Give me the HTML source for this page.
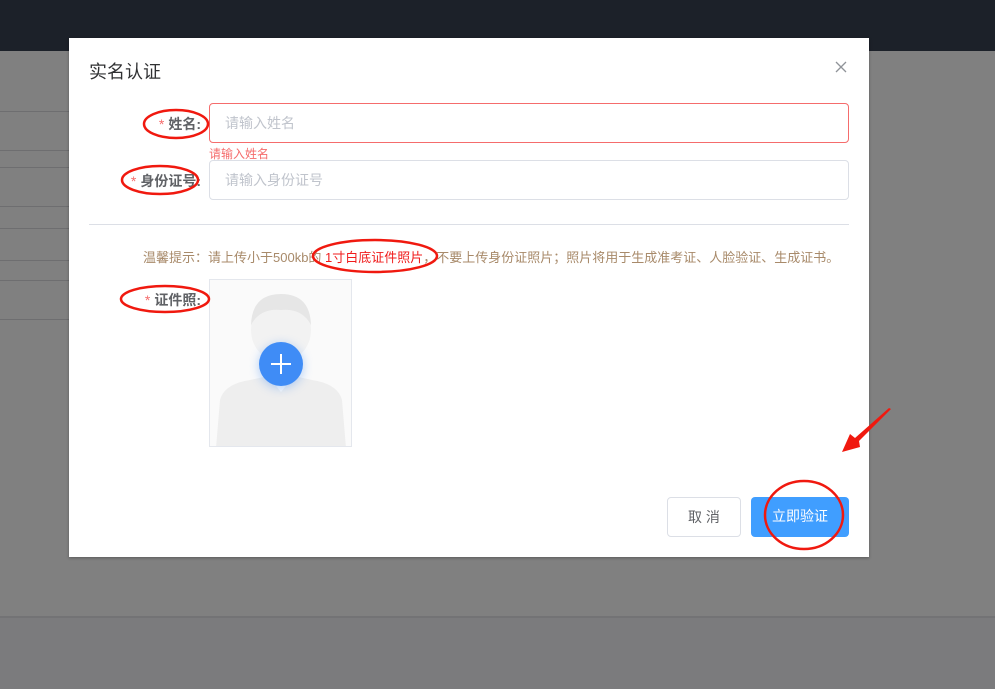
<!DOCTYPE html>
<html><head><meta charset="utf-8"><style>
*{margin:0;padding:0;box-sizing:border-box}
body{width:995px;height:689px;position:relative;overflow:hidden;background:#808080;font-family:"Liberation Sans","Noto Sans CJK SC",sans-serif}
.top{position:absolute;left:0;top:0;width:995px;height:51px;background:#1c2129}
.ln{position:absolute;left:0;width:69px;height:1px;background:#6e6e70}
.bot{position:absolute;left:0;top:616px;width:995px;height:73px;background:#7b7b7d;border-top:2px solid #737375}
.dlg{position:absolute;left:69px;top:38px;width:800px;height:519px;background:#fff;box-shadow:0 1px 3px rgba(0,0,0,.3)}
.abs{position:absolute}
.lbl{position:absolute;font-size:14px;font-weight:bold;color:#606266;text-align:right;width:112px;white-space:nowrap}
.lbl b{color:#f56c6c;font-weight:normal;margin-right:4px}
.inp{position:absolute;left:140px;width:640px;height:40px;border:1px solid #dcdfe6;border-radius:4px;padding-left:15px;line-height:38px;font-size:14px;color:#c0c4cc}
.btn{position:absolute;height:40px;border-radius:4px;font-size:14px;text-align:center;line-height:38px}
</style></head><body>
<div class="top"></div>
<div class="ln" style="top:111px"></div><div class="ln" style="top:150px"></div><div class="ln" style="top:167px"></div><div class="ln" style="top:206px"></div><div class="ln" style="top:228px"></div><div class="ln" style="top:260px"></div><div class="ln" style="top:280px"></div><div class="ln" style="top:319px"></div>
<div class="bot"></div>
<div class="dlg">
<div class="abs" style="left:20px;top:20px;font-size:18px;color:#303133">实名认证</div>
<svg class="abs" style="left:766px;top:23px" width="12" height="12"><path d="M1 1L11 11M11 1L1 11" stroke="#909399" stroke-width="1.3"/></svg>
<div class="lbl" style="left:20px;top:76px"><b>*</b>姓名:</div>
<div class="inp" style="top:65px;border-color:#f56c6c">请输入姓名</div>
<div class="abs" style="left:140px;top:107px;font-size:12px;color:#f56c6c">请输入姓名</div>
<div class="lbl" style="left:20px;top:133px"><b>*</b>身份证号:</div>
<div class="inp" style="top:122px">请输入身份证号</div>
<div class="abs" style="left:20px;top:186px;width:760px;height:1px;background:#dcdfe6"></div>
<div class="abs" style="left:74px;top:209px;font-size:13px;color:#a88a6a;white-space:nowrap">温馨提示：请上传小于500kb的 <span style="color:#f01c1c">1寸白底证件照片</span>，不要上传身份证照片；照片将用于生成准考证、人脸验证、生成证书。</div>
<div class="lbl" style="left:20px;top:252px"><b>*</b>证件照:</div>
<div class="abs" style="left:140px;top:241px;width:143px;height:168px;border:1px solid #e4e7ed;background:#fafafa;overflow:hidden">
<svg width="143" height="168" viewBox="0 0 143 168"><ellipse cx="71" cy="50" rx="30" ry="32" fill="#f2f2f2"/><path d="M41 45 Q42 14 71 14 Q100 14 101 45 Q92 28 71 30 Q50 28 41 45Z" fill="#e6e6e6"/><rect x="58" y="80" width="26" height="24" fill="#f0f0f0"/><path d="M6 168 L10 120 Q14 104 40 100 L58 96 L71 112 L84 96 L102 100 Q128 104 132 120 L136 168Z" fill="#eeeeee"/></svg>
<div class="abs" style="left:49px;top:62px;width:44px;height:44px;border-radius:50%;background:#3f8cf6;box-shadow:0 2px 10px rgba(64,140,246,.4)"><svg width="44" height="44"><path d="M22 12V32M12 22H32" stroke="#fff" stroke-width="2"/></svg></div>
</div>
<div class="btn" style="left:598px;top:459px;width:74px;border:1px solid #dcdfe6;color:#606266">取 消</div>
<div class="btn" style="left:682px;top:459px;width:98px;background:#409eff;color:#fff">立即验证</div>
</div>
<svg class="abs" style="left:0;top:0" width="995" height="689">
<g fill="none" stroke="#f0190f" stroke-width="2.5">
<ellipse cx="176" cy="124" rx="32" ry="14"/>
<ellipse cx="160" cy="180" rx="38" ry="14"/>
<ellipse cx="165" cy="299" rx="44" ry="13"/>
<ellipse cx="375" cy="256" rx="62" ry="16"/>
<ellipse cx="804" cy="515" rx="39" ry="34"/>
</g>
<path d="M891 409 L859 441 L860 447 L842 452 L850 434 L855 438 L889 408Z" fill="#f0190f"/>
</svg>
</body></html>
